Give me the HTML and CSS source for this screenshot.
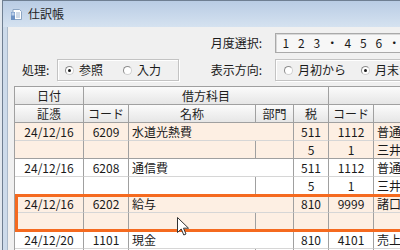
FILE: index.html
```html
<!DOCTYPE html>
<html lang="ja">
<head>
<meta charset="utf-8">
<title>仕訳帳</title>
<link rel="stylesheet" href="styles.css">
</head>
<body>
<div class="window">
  <div class="titlebar">
    <svg class="app-icon" width="13" height="13" viewBox="0 0 13 13">
      <path d="M3 1.5 H9.5 L11.5 3.5 V11.5 H3 Z" fill="#ffffff" stroke="#8da6c4" stroke-width="1"/>
      <rect x="1" y="4" width="4" height="8" fill="#6f93c4"/>
      <rect x="1.5" y="4.5" width="3" height="3" fill="#bcd0ea"/>
      <path d="M6 5 H10 M6 7 H10 M6 9 H10" stroke="#9fb4cf" stroke-width="1"/>
    </svg>
    <span class="title">仕訳帳</span>
  </div>
  <div class="frame">
    <div class="client">
      <div class="controls">
        <div class="label label-right row-month">月度選択:</div>
        <div class="month-box row-month">
          <span class="m">1</span><span class="m">2</span><span class="m">3</span><span class="m">・</span><span class="m">4</span><span class="m">5</span><span class="m">6</span><span class="m">・</span>
        </div>
        <div class="label label-mode">処理:</div>
        <div class="group group-mode">
          <span class="opt"><span class="radio checked"></span>参照</span>
          <span class="opt"><span class="radio"></span>入力</span>
        </div>
        <div class="label label-right label-dir">表示方向:</div>
        <div class="group group-dir">
          <span class="opt"><span class="radio"></span>月初から</span>
          <span class="opt"><span class="radio checked"></span>月末から</span>
        </div>
      </div>
      <div class="grid-wrap">
        <table class="ledger">
          <colgroup>
            <col class="c-date"><col class="c-code"><col class="c-name"><col class="c-dept"><col class="c-tax"><col class="c-code2"><col class="c-name2">
          </colgroup>
          <thead>
            <tr>
              <th>日付</th>
              <th colspan="4">借方科目</th>
              <th colspan="2"></th>
            </tr>
            <tr>
              <th>証憑</th>
              <th>コード</th>
              <th>名称</th>
              <th>部門</th>
              <th>税</th>
              <th>コード</th>
              <th></th>
            </tr>
          </thead>
          <tbody>
            <tr class="peach first">
              <td class="ctr">24/12/16</td><td class="ctr">6209</td><td colspan="2">水道光熱費</td><td class="ctr">511</td><td class="ctr">1112</td><td>普通預金</td>
            </tr>
            <tr class="peach second">
              <td></td><td></td><td></td><td></td><td class="ctr">5</td><td class="ctr">1</td><td>三井住友</td>
            </tr>
            <tr class="first">
              <td class="ctr">24/12/16</td><td class="ctr">6208</td><td colspan="2">通信費</td><td class="ctr">511</td><td class="ctr">1112</td><td>普通預金</td>
            </tr>
            <tr class="second">
              <td></td><td></td><td></td><td></td><td class="ctr">5</td><td class="ctr">1</td><td>三井住友</td>
            </tr>
            <tr class="peach first">
              <td class="ctr">24/12/16</td><td class="ctr">6202</td><td colspan="2">給与</td><td class="ctr">810</td><td class="ctr">9999</td><td>諸口</td>
            </tr>
            <tr class="peach second">
              <td></td><td></td><td></td><td></td><td></td><td></td><td></td>
            </tr>
            <tr class="first">
              <td class="ctr">24/12/20</td><td class="ctr">1101</td><td colspan="2">現金</td><td class="ctr">810</td><td class="ctr">4101</td><td>売上高</td>
            </tr>
            <tr class="second">
              <td></td><td></td><td></td><td></td><td></td><td></td><td></td>
            </tr>
          </tbody>
        </table>
        <div class="selection"></div>
        <svg class="cursor" width="13" height="19" viewBox="0 0 13 19">
          <path d="M0.5 0.5 V15.5 L4.2 12 L6.8 18 L9 17 L6.5 11.2 H11.5 Z" fill="#ffffff" stroke="#333333" stroke-width="1" stroke-linejoin="round"/>
        </svg>
      </div>
    </div>
  </div>
</div>
</body>
</html>
```
FILE: styles.css
```css
* { box-sizing: border-box; }

body {
  margin: 0;
  width: 400px;
  height: 250px;
  overflow: hidden;
  background: #e2e8ef;
  font-family: "Noto Sans CJK JP", "Liberation Sans", sans-serif;
  font-size: 12px;
  color: #1a1a1a;
}

.window {
  margin-left: 2px;
  width: 440px;
  height: 250px;
  border-left: 1px solid #6f7f92;
  border-top: 1px solid #6f7f92;
  display: flex;
  flex-direction: column;
  background: #cddbeb;
}

.titlebar {
  height: 26px;
  flex: none;
  display: flex;
  align-items: center;
  gap: 5px;
  padding-left: 7px;
  background: linear-gradient(#b9cce4, #d5e2f0);
}

.app-icon { display: block; }

.title {
  line-height: 14px;
  color: #1e1e1e;
}

.frame {
  flex: 1;
  display: flex;
  padding-left: 4px;
  min-height: 0;
}

.client {
  flex: 1;
  background: #f0f0f0;
  border-left: 1px solid #aab9ca;
  overflow: hidden;
}

.controls {
  display: grid;
  grid-template-columns: 35px 122px 29px 67px 200px;
  grid-template-rows: 20px 22px;
  row-gap: 6px;
  margin-top: 6px;
  padding-left: 14px;
  align-items: center;
}

.label {
  line-height: 14px;
  white-space: nowrap;
}

.label-right {
  grid-column: 4;
  justify-self: end;
  padding-right: 13px;
}

.row-month { grid-row: 1; }

.label-mode { grid-column: 1; grid-row: 2; }

.month-box {
  grid-column: 5;
  height: 20px;
  display: flex;
  align-items: center;
  padding-left: 2px;
  background: #f7f7f7;
  border: 1px solid #a9a9a9;
  box-shadow: inset 1px 1px 0 #d8d8d8;
}

.m {
  width: 15.5px;
  text-align: center;
  line-height: 14px;
}

.group {
  height: 22px;
  grid-row: 2;
  display: flex;
  align-items: center;
  border: 1px solid #c3c3c3;
  box-shadow: inset 1px 1px 0 #ffffff, 1px 1px 0 #ffffff;
}

.group-mode { grid-column: 2; padding-left: 7px; gap: 20px; }
.group-dir { grid-column: 5; padding-left: 8px; gap: 15px; }
.label-dir { grid-row: 2; }

.opt {
  display: flex;
  align-items: center;
  gap: 5px;
  line-height: 14px;
  white-space: nowrap;
}

.radio {
  width: 9px;
  height: 9px;
  border-radius: 50%;
  border: 1px solid #8c8c8c;
  border-right-color: #d0d0d0;
  border-bottom-color: #d0d0d0;
  background: #ffffff;
  display: flex;
  align-items: center;
  justify-content: center;
}

.radio.checked::after {
  content: "";
  width: 3px;
  height: 3px;
  border-radius: 50%;
  background: #1a1a1a;
}

.grid-wrap {
  position: relative;
  margin-top: 5px;
  margin-left: 6px;
}

.ledger {
  border-collapse: separate;
  border-spacing: 0;
  table-layout: fixed;
  width: 440px;
  border-left: 1px solid #a0a0a0;
  border-top: 1px solid #a0a0a0;
}

.c-date { width: 69px; }
.c-code { width: 45px; }
.c-name { width: 127px; }
.c-dept { width: 38px; }
.c-tax { width: 35px; }
.c-code2 { width: 45px; }
.c-name2 { width: 80px; }

.ledger th,
.ledger td {
  height: 18px;
  padding: 0 3px;
  border-right: 1px solid #a0a0a0;
  border-bottom: 1px solid #a0a0a0;
  line-height: 16px;
  white-space: nowrap;
  overflow: hidden;
  font-weight: normal;
}

.ledger th {
  text-align: center;
  background: linear-gradient(#fbfbfb, #e6e6e6);
  color: #1e1e1e;
}

.ledger td { text-align: left; }
.ledger td.ctr { text-align: center; }

.ledger tr.first td { border-bottom-color: #d6d6d6; }

.ledger tr.peach td { background: #fdefe3; }
.ledger tbody tr:not(.peach) td { background: #ffffff; }

.selection {
  position: absolute;
  left: 1px;
  top: 108px;
  width: 460px;
  height: 38px;
  border: 3px solid #f56a1f;
  pointer-events: none;
}

.cursor {
  position: absolute;
  left: 163px;
  top: 131px;
}
```
